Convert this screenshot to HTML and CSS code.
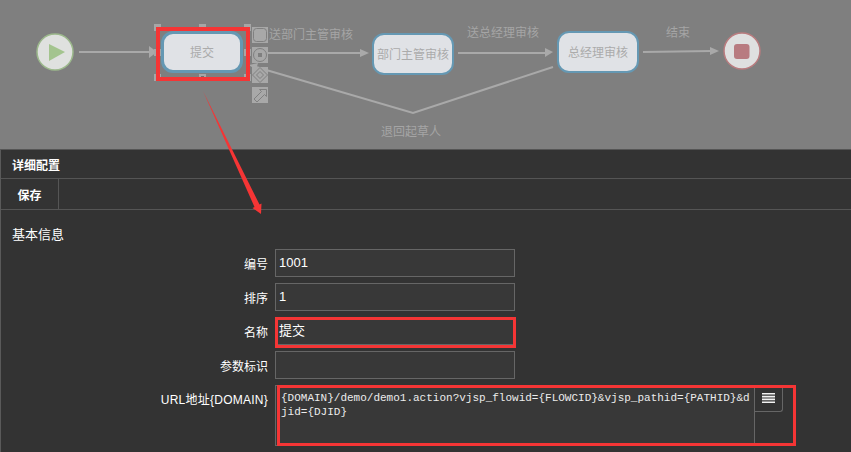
FILE: index.html
```html
<!DOCTYPE html>
<html lang="zh">
<head>
<meta charset="utf-8">
<title>详细配置</title>
<link rel="stylesheet" href="styles.css">
</head>
<body>
<div class="page">
  <section class="canvas">
    <svg class="edges" width="851" height="149" viewBox="0 0 851 149">
      <g class="edge">
        <path d="M79 52H150"/>
        <path d="M268 53H361"/>
        <path d="M458 53H546"/>
        <path d="M643 52L711 51"/>
        <path d="M553 67L413 113L256 67"/>
      </g>
      <g class="head">
        <path d="M149 46L157 52L149 58Z"/>
        <path d="M360 49L369 53L360 57Z"/>
        <path d="M545 48L553 52L545 57Z"/>
        <path d="M710 47L719 51L710 55Z"/>
        <path d="M249 65L258 63L256 70Z"/>
      </g>
      <circle class="start" cx="55" cy="52" r="18"/>
      <path class="play" d="M49 44L65 52L49 61Z"/>
      <circle class="stop" cx="742" cy="51" r="18"/>
      <rect class="stop-mark" x="734" y="44" width="15.500" height="15" rx="3"/>
      <g class="handle">
        <rect x="154" y="24" width="7" height="7"/>
        <rect x="199" y="24" width="7" height="7"/>
        <rect x="244" y="24" width="7" height="7"/>
        <rect x="154" y="49" width="7" height="7"/>
        <rect x="244" y="49" width="7" height="7"/>
        <rect x="154" y="74" width="7" height="7"/>
        <rect x="199" y="74" width="7" height="7"/>
        <rect x="244" y="74" width="7" height="7"/>
      </g>
      <rect class="handle-hole" x="201" y="76" width="3" height="3"/>
      <g class="tool">
        <rect x="252" y="27" width="16" height="16"/>
        <rect x="252" y="47" width="16" height="16"/>
        <rect x="252" y="67" width="16" height="16"/>
        <rect x="252" y="87" width="16" height="16"/>
      </g>
      <g class="tool-line">
        <rect x="253.500" y="28.500" width="13" height="13" rx="3"/>
        <circle cx="260" cy="55" r="6.500"/>
        <path d="M260 67.500L267.500 75L260 82.500L252.500 75Z"/>
        <path d="M260 71.500L263.500 75L260 78.500L256.500 75Z"/>
        <path d="M254 99L261.500 91.500L259.500 89.500L266.500 89.500L266.500 96.500L264.500 94.500L257 102Z"/>
      </g>
      <rect class="tool-dot" x="258" y="53" width="4" height="4"/>
    </svg>
    <div class="node node-first">提交</div>
    <div class="node node-dept">部门主管审核</div>
    <div class="node node-mgr">总经理审核</div>
    <span class="edge-label label-a">送部门主管审核</span>
    <span class="edge-label label-b">送总经理审核</span>
    <span class="edge-label label-c">结束</span>
    <span class="edge-label label-d">退回起草人</span>
  </section>

  <section class="panel">
    <h2 class="panel-title">详细配置</h2>
    <div class="toolbar"><span class="tool-button">保存</span></div>
    <div class="panel-body">
      <h3 class="section-title">基本信息</h3>
      <div class="form">
        <div class="row"><span class="field-label">编号</span><div class="field">1001</div></div>
        <div class="row"><span class="field-label">排序</span><div class="field">1</div></div>
        <div class="row"><span class="field-label">名称</span><div class="field">提交</div></div>
        <div class="row"><span class="field-label">参数标识</span><div class="field"></div></div>
        <div class="row row-area">
          <span class="field-label">URL地址{DOMAIN}</span>
          <div class="area">{DOMAIN}/demo/demo1.action?vjsp_flowid={FLOWCID}&amp;vjsp_pathid={PATHID}&amp;djid={DJID}</div>
          <div class="area-button">
            <svg width="13" height="10" viewBox="0 0 13 10"><path class="list-icon" d="M0 0H13V1.600H0ZM0 2.800H13V4.400H0ZM0 5.600H13V7.200H0ZM0 8.400H13V10H0Z"/></svg>
          </div>
        </div>
      </div>
    </div>
  </section>

  <svg class="notes" width="851" height="452" viewBox="0 0 851 452">
    <g class="note-box">
      <rect class="note-thick" x="158" y="29" width="90" height="50"/>
      <rect x="276.500" y="318.500" width="238" height="28"/>
      <rect x="278.500" y="386.500" width="516" height="58"/>
    </g>
    <path class="note-line" d="M203 91L259.500 204.500L261.500 203.500L261 214L252.500 208L254.500 207Z"/>
  </svg>
</div>
</body>
</html>
```

FILE: styles.css
```css
* {
  box-sizing: border-box;
}

html,
body {
  margin: 0;
  padding: 0;
  background: #333;
}

body {
  font-family: "Liberation Sans", "Noto Sans CJK SC", sans-serif;
  font-size: 12px;
  color: #fff;
}

.page {
  position: relative;
  width: 851px;
  height: 452px;
  overflow: hidden;
}

/* Diagram */
.canvas {
  position: relative;
  height: 149px;
  background: #7f7f7f;
}

.edges {
  position: absolute;
  inset: 0;
}

.edge path {
  fill: none;
  stroke: #a9a9a9;
  stroke-width: 2;
}

.head path {
  fill: #a9a9a9;
}

.start {
  fill: #dfe1df;
  stroke: #9cb98c;
  stroke-width: 1.500;
}

.play {
  fill: #a3c48e;
}

.stop {
  fill: #dfe0e0;
  stroke: #b97c7f;
  stroke-width: 1.500;
}

.stop-mark {
  fill: #b87b80;
}

.handle rect {
  fill: #a6a6a6;
}

.handle-hole {
  fill: #6e6e6e;
}

.tool rect {
  fill: #a8a8a8;
}

.tool-line rect,
.tool-line circle,
.tool-line path {
  fill: none;
  stroke: #808080;
  stroke-width: 1;
}

.tool-dot {
  fill: #7f7f7f;
}

.node {
  position: absolute;
  display: flex;
  align-items: center;
  justify-content: center;
  width: 82px;
  height: 42px;
  padding-bottom: 2px;
  border: 2px solid #6598b3;
  border-radius: 12px;
  background: #e0e2e6;
  color: #ababab;
  white-space: nowrap;
}

.node-first {
  left: 161px;
  top: 31px;
  border-width: 3px;
}

.node-dept {
  left: 372px;
  top: 33px;
}

.node-mgr {
  left: 557px;
  top: 31px;
}

.edge-label {
  position: absolute;
  color: #a5a5a5;
  line-height: 14px;
  white-space: nowrap;
}

.label-a {
  left: 269px;
  top: 28px;
}

.label-b {
  left: 467px;
  top: 26px;
}

.label-c {
  left: 666px;
  top: 26px;
}

.label-d {
  left: 381px;
  top: 125px;
}

/* Panel */
.panel {
  height: 303px;
  border-top: 1px solid #555;
  border-left: 1px solid #5a5a5a;
  background: #333;
}

.panel-title {
  display: flex;
  align-items: center;
  height: 29px;
  margin: 0;
  padding-left: 11px;
  border-bottom: 1px solid #555;
  font-size: 12px;
  font-weight: 700;
}

.toolbar {
  display: flex;
  height: 31px;
  border-bottom: 1px solid #555;
}

.tool-button {
  display: flex;
  align-items: center;
  justify-content: center;
  width: 58px;
  border-right: 1px solid #555;
  font-weight: 700;
}

.panel-body {
  padding-top: 16px;
}

.section-title {
  margin: 0;
  padding-left: 11px;
  font-size: 13px;
  font-weight: 400;
  line-height: 18px;
}

.form {
  display: flex;
  flex-direction: column;
  gap: 6px;
  margin-top: 5px;
}

.row {
  display: flex;
  align-items: center;
  gap: 7px;
}

.field-label {
  flex: none;
  width: 267px;
  text-align: right;
}

.field {
  width: 240px;
  height: 28px;
  padding-left: 3px;
  border: 1px solid #666;
  background: #383838;
  font-size: 13px;
  line-height: 26px;
}

.row-area {
  align-items: flex-start;
  gap: 0;
}

.row-area .field-label {
  margin-right: 7px;
  padding-top: 5px;
  letter-spacing: 0.25px;
}

.area {
  flex: none;
  width: 480px;
  height: 61px;
  padding: 5px 0 0 5px;
  border: 1px solid #666;
  background: #383838;
  color: #ececec;
  font-family: "Liberation Mono", "Noto Sans CJK SC", monospace;
  font-size: 11px;
  line-height: 14px;
  word-break: break-all;
}

.area-button {
  display: flex;
  align-items: center;
  justify-content: center;
  width: 28px;
  height: 27px;
  border-right: 1px solid #666;
  border-bottom: 1px solid #666;
  border-radius: 0 0 3px 0;
}

.list-icon {
  fill: #f2f2f2;
}

/* Red annotations */
.notes {
  position: absolute;
  inset: 0;
  pointer-events: none;
}

.note-box rect {
  fill: none;
  stroke: #f53535;
  stroke-width: 3;
}

.note-box .note-thick {
  stroke-width: 4;
}

.note-line {
  fill: #f53535;
}
```
